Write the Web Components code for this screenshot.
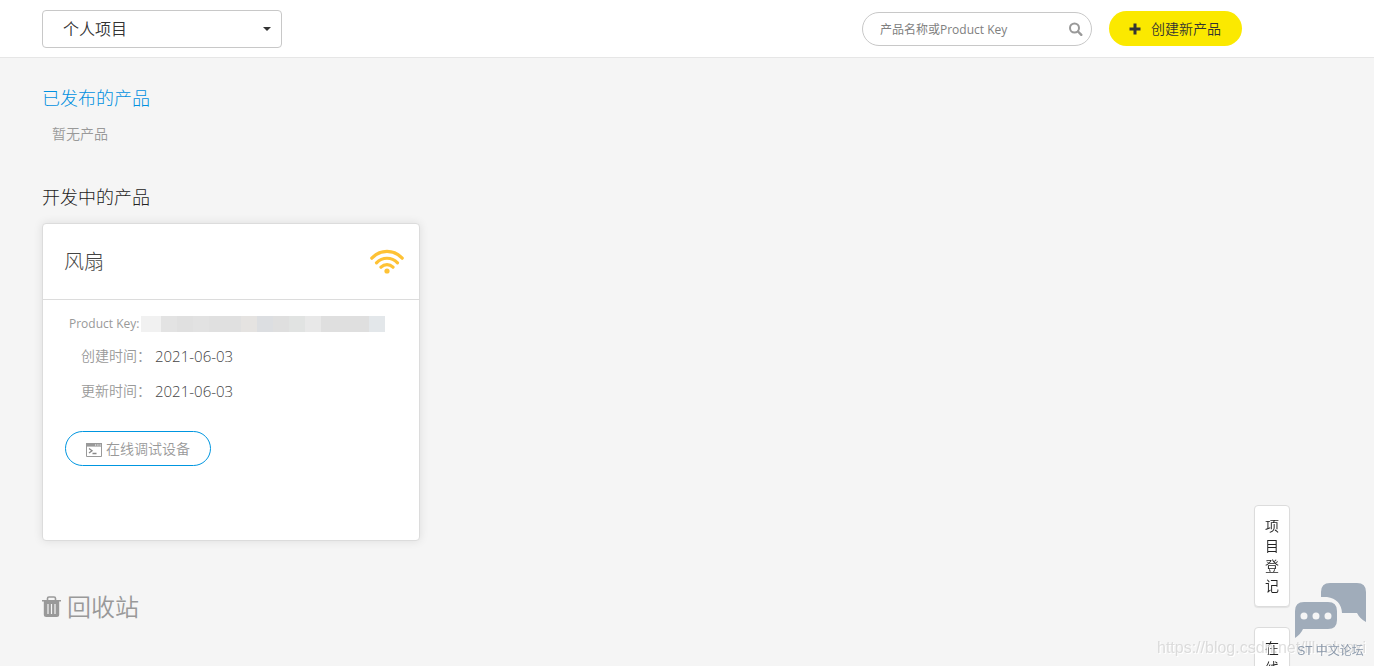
<!DOCTYPE html>
<html lang="zh-CN">
<head>
<meta charset="utf-8">
<meta name="viewport" content="width=device-width, initial-scale=1">
<title>产品列表</title>
<style>
html { height: 100%; background: #f5f5f5; }
body { margin: 0; min-height: 100%; color: #333; font: 14px/20px "Open Sans", "Noto Sans CJK SC", sans-serif; font-weight: 350; }
</style>
</head>
<body>
<product-console>
  <top-bar slot="header">
    <project-select></project-select>
    <product-search slot="actions"></product-search>
    <create-button slot="actions">创建新产品</create-button>
  </top-bar>
  <product-section tone="accent">
    <span slot="title">已发布的产品</span>
    <empty-note>暂无产品</empty-note>
  </product-section>
  <product-section>
    <span slot="title">开发中的产品</span>
    <product-card>
      <span slot="name">风扇</span>
      <span slot="created">2021-06-03</span>
      <span slot="updated">2021-06-03</span>
    </product-card>
  </product-section>
  <recycle-link>回收站</recycle-link>
</product-console>
<side-dock>
  <side-tab>项目登记</side-tab>
  <side-tab>在线咨询</side-tab>
</side-dock>
<forum-badge>ST 中文论坛</forum-badge>
<water-mark>https://blog.csdn.net/llluoluoxi</water-mark>

<script>
function component(name, html) {
  const template = document.createElement('template');
  template.innerHTML = html;
  customElements.define(name, class extends HTMLElement {
    constructor() {
      super();
      this.attachShadow({ mode: 'open' }).append(template.content.cloneNode(true));
    }
  });
}

component('product-console', `
<style>
:host { display: block; }
main { display: flex; flex-direction: column; padding: 30px 42px 40px; }
</style>
<slot name="header"></slot>
<main><slot></slot></main>`);

component('top-bar', `
<style>
:host { display: block; background: #fff; border-bottom: 1px solid #e6e6e6; }
header { display: flex; align-items: center; justify-content: space-between; max-width: 1200px; margin: 0 42px; height: 57px; }
.actions { display: flex; align-items: center; gap: 17px; }
</style>
<header><slot></slot><div class="actions"><slot name="actions"></slot></div></header>`);

component('project-select', `
<style>
:host { display: grid; width: 240px; }
select, svg { grid-area: 1 / 1; }
select { appearance: none; box-sizing: border-box; height: 38px; width: 100%; padding: 0 36px 0 20px; border: 1px solid #c8c8c8; border-radius: 4px; background: #fff; color: #333; font: inherit; font-size: 16px; }
svg { place-self: center end; margin-right: 11px; pointer-events: none; }
</style>
<select aria-label="项目"><option>个人项目</option></select>
<svg width="8" height="4" viewBox="0 0 8 4" aria-hidden="true"><path d="M0 0h8L4 4z" fill="#333"/></svg>`);

component('product-search', `
<style>
:host { display: block; }
form { display: flex; align-items: center; box-sizing: border-box; width: 230px; height: 34px; padding: 0 8px 0 17px; border: 1px solid #c8c8c8; border-radius: 17px; background: #fff; }
input { flex: 1; min-width: 0; height: 32px; box-sizing: border-box; padding: 1px 0 0; border: 0; outline: 0; background: none; color: #333; font: inherit; font-size: 12px; font-weight: 400; }
input::placeholder { color: #808080; opacity: 1; }
button { display: flex; padding: 0; border: 0; background: none; }
</style>
<form role="search" onsubmit="return false">
<input type="text" aria-label="搜索产品" placeholder="产品名称或Product Key">
<button aria-label="搜索"><svg width="15" height="15" viewBox="0 0 15 15" fill="none" stroke="#999"><circle cx="6.500" cy="7" r="4.500" stroke-width="2"/><path d="M10 10.500l3.300 3.300" stroke-width="2.400" stroke-linecap="round"/></svg></button>
</form>`);

component('create-button', `
<style>
:host { display: block; }
button { display: flex; align-items: center; gap: 10px; min-width: 133px; height: 35px; padding: 0 20px; border: 0; border-radius: 18px; background: #fbe900; color: #333; font: inherit; }
</style>
<button><svg width="12" height="12" viewBox="0 0 12 12" aria-hidden="true"><path d="M4.500 .5h3v4h4v3h-4v4h-3v-4h-4v-3h4z" fill="#333"/></svg><span><slot></slot></span></button>`);

component('product-section', `
<style>
:host { display: block; margin-bottom: 44px; }
h2 { margin: 0 0 16px; font-size: 18px; line-height: 20px; font-weight: 300; color: #222; }
:host([tone="accent"]) { margin-bottom: 43px; }
:host([tone="accent"]) h2 { color: #0090e0; }
</style>
<h2><slot name="title"></slot></h2>
<slot></slot>`);

component('empty-note', `
<style>:host { display: block; padding-left: 10px; color: #999; }</style><slot></slot>`);

component('product-card', `
<style>
:host { display: block; box-sizing: border-box; max-width: 378px; min-height: 318px; border: 1px solid #dcdcdc; border-radius: 4px; background: #fff; box-shadow: 0 0 10px rgba(0,0,0,.1); }
header { display: flex; align-items: center; justify-content: space-between; height: 75px; padding: 0 15px 0 21px; border-bottom: 1px solid #dcdcdc; }
h3 { margin: 0; font-size: 20px; font-weight: 300; color: #444; }
.body { padding: 14px 22px; }
dl { margin: 0; display: flex; flex-direction: column; gap: 15px; }
dl div { display: flex; align-items: center; padding-left: 16px; }
dl .key { padding-left: 4px; margin-bottom: -3px; }
dt { color: #999; white-space: nowrap; }
.key dt { font-size: 12px; font-weight: 400; }
dd { margin: 0; padding-left: 4px; color: #444; font-size: 15px; font-weight: 350; }
.key dd { padding: 0 0 0 2px; }
.mask { display: block; width: 244px; height: 16px; background: linear-gradient(90deg, #f1f1f1 0 20px, #e3e3e3 20px 36px, #e0e0e0 36px 52px, #e2e2e2 52px 68px, #e0e0e0 68px 100px, #e5e3e1 100px 116px, #dcdee1 116px 132px, #dfdfdf 132px 148px, #e1e3e2 148px 164px, #e8e8e8 164px 180px, #dfdfdf 180px 228px, #e3e7ea 228px); }
a { display: inline-flex; align-items: center; gap: 4px; box-sizing: border-box; min-width: 146px; height: 35px; margin-top: 30px; padding: 0 20px; border: 1px solid #0096e0; border-radius: 18px; color: #999; text-decoration: none; }
a svg { margin-top: 2px; }
</style>
<header><h3><slot name="name"></slot></h3>
<svg width="34" height="25" viewBox="0 0 34 25" fill="none" stroke="#fec235" stroke-width="3.2" stroke-linecap="round" aria-hidden="true"><path d="M1.8 9.2C10.2.2 23.8.2 32.2 9.2M6.5 13.8C12.5 7.7 21.5 7.7 27.5 13.8M11 18.2C14.5 14.7 19.5 14.7 23 18.2"/><circle cx="17" cy="22" r="2.6" fill="#fec235" stroke="none"/></svg></header>
<div class="body">
<dl>
<div class="key"><dt>Product Key:</dt><dd><span class="mask"></span></dd></div>
<div><dt>创建时间：</dt><dd><slot name="created"></slot></dd></div>
<div><dt>更新时间：</dt><dd><slot name="updated"></slot></dd></div>
</dl>
<a href="#debug"><svg width="16" height="14" viewBox="0 0 16 14" aria-hidden="true"><path d="M.5 .5h15v13H.5z" fill="none" stroke="#999"/><path d="M0 0h16v3.600H0z" fill="#999"/><path d="M9 2h1.200M11.300 2h1.200M13.600 2h1.200" stroke="#fff"/><path d="M3 5.500l3 2.200-3 2.200M6.500 10.500h4" fill="none" stroke="#888" stroke-width="1.300"/></svg><span>在线调试设备</span></a>
</div>`);

component('recycle-link', `
<style>
:host { display: block; }
a { display: inline-flex; align-items: center; gap: 6px; color: #999; font-size: 24px; line-height: 44px; text-decoration: none; }
</style>
<a href="#recycle"><svg width="19" height="22" viewBox="0 0 19 22" aria-hidden="true"><path d="M5.500 4V2.500Q5.500 1 7 1h5q1.500 0 1.500 1.500V4" fill="none" stroke="#999" stroke-width="1.600"/><path d="M0 4h19v1.500H0z" fill="#999"/><path d="M1.800 5h15.400v13.500q0 2.500-2.500 2.500H4.300q-2.500 0-2.500-2.500z" fill="#999"/><path d="M6 8v10M9.500 8v10M13 8v10" stroke="#f5f5f5" stroke-width="1.200"/></svg><span><slot></slot></span></a>`);

component('side-dock', `
<style>
:host { position: fixed; top: 505px; right: 84px; display: flex; flex-direction: column; gap: 20px; }
</style><slot></slot>`);

component('side-tab', `
<style>
:host { display: block; }
button { display: block; width: 36px; padding: 10px; border: 1px solid #dcdcdc; border-radius: 4px; background: #fff; color: #222; font: inherit; box-shadow: 0 1px 1px rgba(0,0,0,.08); word-break: break-all; }
</style><button><slot></slot></button>`);

component('forum-badge', `
<style>
:host { position: fixed; right: 8px; bottom: 5px; z-index: 1; }
a { display: flex; flex-direction: column; align-items: center; gap: 2px; color: #8a98aa; font: 12px/20px "Liberation Sans", "Noto Sans CJK SC", sans-serif; font-weight: 350; text-decoration: none; white-space: nowrap; }
</style>
<a href="#forum"><svg width="71" height="57" viewBox="0 0 71 57" fill="#a0acba" aria-hidden="true"><path d="M26 15V10Q26 1 35 1H62Q71 1 71 10V40Q65 37 62 31H47Q46 17 32 15Z"/><path fill-rule="evenodd" d="M9 20H33Q42 20 42 29V38Q42 47 33 47H8Q6 52 0 56V29Q0 20 9 20ZM9 30.500a3.500 3.500 0 1 0 0 7a3.500 3.500 0 1 0 0-7ZM21 30.500a3.500 3.500 0 1 0 0 7a3.500 3.500 0 1 0 0-7ZM33 30.500a3.500 3.500 0 1 0 0 7a3.500 3.500 0 1 0 0-7Z"/></svg><span><slot></slot></span></a>`);

component('water-mark', `
<style>
:host { position: fixed; right: 8px; bottom: 8px; color: rgba(200,200,200,.6); font: 16px/20px "Liberation Sans", sans-serif; text-shadow: 1px 1px 0 #fff; pointer-events: none; white-space: nowrap; }
</style><slot></slot>`);
</script>
</body>
</html>
